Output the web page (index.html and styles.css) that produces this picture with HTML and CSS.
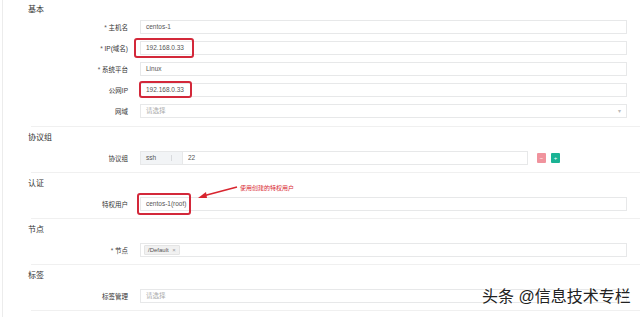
FILE: index.html
```html
<!DOCTYPE html>
<html lang="zh">
<head>
    <meta charset="UTF-8">
    <title>资产</title>
    <link rel="stylesheet" href="styles.css">
</head>
<body>
    <div class="page">
        <div class="section first">
            <div class="section-title">基本</div>
            <div class="row">
                <label class="label"><span class="req">*</span> 主机名</label>
                <div class="input">centos-1</div>
            </div>
            <div class="row">
                <label class="label"><span class="req">*</span> IP(域名)</label>
                <div class="input">192.168.0.33</div>
                <div class="mark mark-ip"></div>
            </div>
            <div class="row">
                <label class="label"><span class="req">*</span> 系统平台</label>
                <div class="input">Linux</div>
            </div>
            <div class="row">
                <label class="label">公网IP</label>
                <div class="input">192.168.0.33</div>
                <div class="mark mark-pub"></div>
            </div>
            <div class="row">
                <label class="label">网域</label>
                <div class="input placeholder">请选择<span class="caret">▾</span></div>
            </div>
        </div>

        <div class="section">
            <div class="section-title">协议组</div>
            <div class="row">
                <label class="label">协议组</label>
                <div class="proto">
                    <div class="proto-select">ssh<span class="sep"></span></div>
                    <div class="input proto-port">22</div>
                </div>
                <div class="btns">
                    <span class="btn btn-del">−</span>
                    <span class="btn btn-add">+</span>
                </div>
            </div>
        </div>

        <div class="section">
            <div class="section-title">认证</div>
            <div class="row">
                <label class="label">特权用户</label>
                <div class="input">centos-1(root)</div>
                <div class="mark mark-user"></div>
                <svg class="arrow" width="44" height="16" viewBox="0 0 44 16">
                    <path d="M40 2 L6 11" stroke="#d8252f" stroke-width="1.6" fill="none"/>
                    <path d="M1 13 L9 7 L10 13 Z" fill="#d8252f"/>
                </svg>
                <span class="note">使用创建的特权用户</span>
            </div>
        </div>

        <div class="section">
            <div class="section-title">节点</div>
            <div class="row">
                <label class="label"><span class="req">*</span> 节点</label>
                <div class="input"><span class="tag">/Default <i>×</i></span></div>
            </div>
        </div>

        <div class="section">
            <div class="section-title">标签</div>
            <div class="row">
                <label class="label">标签管理</label>
                <div class="input placeholder">请选择</div>
            </div>
        </div>

        <div class="watermark">头条 @信息技术专栏</div>
    </div>
</body>
</html>
```

FILE: styles.css
```css
body {
    margin: 0;
    background: #fff;
    font-family: "Liberation Sans", "Noto Sans CJK SC", sans-serif;
    color: #333;
    overflow: hidden;
}
.page {
    position: relative;
    width: 638px;
    height: 317px;
    margin-left: 2px;
    border-left: 1px solid #ececec;
}
.section {
    margin-left: 28px;
    padding: 5px 0 7px;
    border-bottom: 1px solid #f0f0f0;
    display: flex;
    flex-direction: column;
    gap: 7px;
}
.section.first {
    padding-top: 4px;
    padding-bottom: 8px;
}
.section.first .section-title {
    margin-bottom: -3px;
}
.section-title {
    height: 12px;
    line-height: 12px;
    font-size: 8px;
    margin-left: -3px;
    color: #333;
}
.row {
    position: relative;
    display: flex;
    align-items: center;
    height: 14px;
}
.label {
    width: 97px;
    padding-right: 12px;
    text-align: right;
    font-size: 6.5px;
    color: #333;
    flex: none;
}
.req {
    color: #555;
}
.input {
    position: relative;
    box-sizing: border-box;
    width: 487px;
    height: 14px;
    line-height: 12px;
    border: 1px solid #e7e8e9;
    padding-left: 5px;
    font-size: 6.5px;
    color: #555;
    background: #fff;
}
.placeholder {
    color: #aaa;
}
.caret {
    position: absolute;
    right: 5px;
    top: 0;
    font-size: 6px;
    color: #bbb;
}
.proto {
    display: flex;
    width: 388px;
}
.proto-select {
    position: relative;
    box-sizing: border-box;
    width: 43px;
    height: 14px;
    line-height: 12px;
    padding-left: 5px;
    font-size: 6.5px;
    color: #555;
    background: #f2f4f6;
    border: 1px solid #e7e8e9;
}
.sep {
    position: absolute;
    right: 10px;
    top: 3px;
    width: 1px;
    height: 6px;
    background: #d8dadd;
}
.proto-port {
    width: 346px;
    border-left: none;
}
.btns {
    display: flex;
    gap: 5px;
    margin-left: 9px;
}
.btn {
    width: 9px;
    height: 10px;
    border-radius: 1px;
    color: #fff;
    font-size: 6px;
    line-height: 10px;
    text-align: center;
}
.btn-del {
    background: #f0939d;
}
.btn-add {
    background: #1ab394;
}
.tag {
    display: inline-block;
    background: #f1f1f1;
    border: 1px solid #e4e4e4;
    border-radius: 1px;
    padding: 0 3px;
    line-height: 8px;
    font-size: 6px;
    color: #555;
    margin-left: -2px;
}
.tag i {
    font-style: normal;
    color: #999;
    margin-left: 2px;
}
.mark {
    position: absolute;
    border: 2px solid #d3283a;
    border-radius: 3px;
}
.mark-ip {
    left: 103px;
    top: -3px;
    width: 56px;
    height: 16px;
}
.mark-pub {
    left: 108px;
    top: -2px;
    width: 49px;
    height: 13px;
}
.mark-user {
    left: 106px;
    top: -4px;
    width: 50px;
    height: 18px;
}
.arrow {
    position: absolute;
    left: 166px;
    top: -12px;
}
.note {
    position: absolute;
    left: 209px;
    top: -14px;
    font-size: 6px;
    color: #d8252f;
    white-space: nowrap;
}
.watermark {
    position: absolute;
    left: 479px;
    top: 288px;
    font-size: 16px;
    line-height: 18px;
    color: #222;
    white-space: nowrap;
    text-shadow: 0 0 2px #fff, 0 0 2px #fff, 0 0 2px #fff;
}
```
